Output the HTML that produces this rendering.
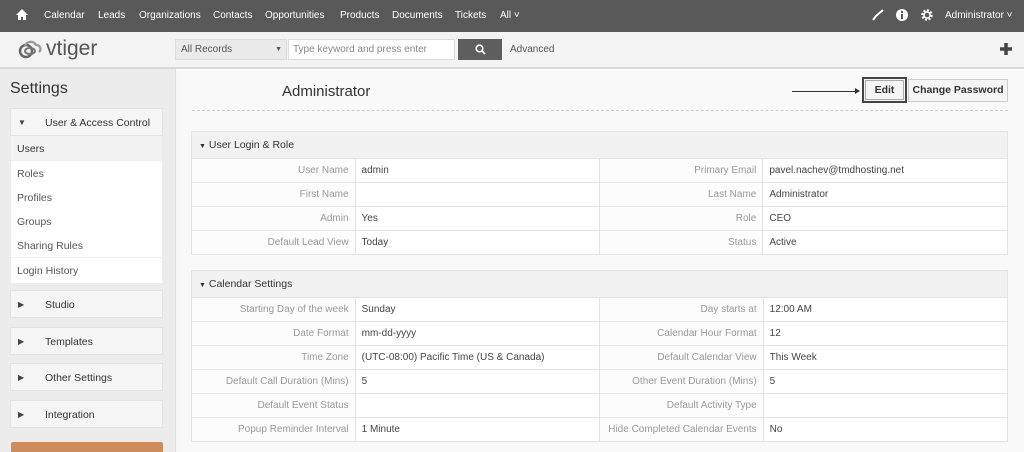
<!DOCTYPE html>
<html><head><meta charset="utf-8"><style>
*{box-sizing:border-box;margin:0;padding:0}
html,body{width:1024px;height:452px;overflow:hidden}
body{font-family:"Liberation Sans",sans-serif;background:#f7f7f7;position:relative;font-size:10.5px;color:#333}
.abs{position:absolute}
#top{left:0;top:0;width:1024px;height:32px;background:#595959;color:#fff;font-size:10px}
#top span{position:absolute;top:10px}
#hdr{left:0;top:32px;width:1024px;height:37px;background:#f3f3f3;border-bottom:2px solid #d9d9d9}
#side{left:0;top:69px;width:176px;height:383px;background:#ececec;border-right:1px solid #e0e0e0}
.box{position:absolute;left:10px;width:153px;background:#f5f5f5;border:1px solid #e2e2e2}
.box .t{position:absolute;left:34px;top:8px;font-size:10.5px;color:#333}
.box .a{position:absolute;left:7px;top:9px;font-size:8px;color:#444}
.item{position:absolute;left:11px;width:151px;height:25px;background:#fff;border-bottom:1px solid #eee;padding:7px 6px;color:#555}
table{position:absolute;left:191px;width:817px;border-collapse:collapse;background:#fff}
td{border:1px solid #e3e3e3;height:24px;padding:0 6px;font-size:10px}
td.l{text-align:right;color:#999;background:#fcfcfc;width:164px}
td.v{width:245px;color:#444}
th{background:#f1f1f1;height:27px;text-align:left;font-weight:normal;padding-left:7px;border:1px solid #e3e3e3;color:#333;font-size:10.5px}
.btn{position:absolute;top:79px;height:23px;background:#f5f5f5;border:1px solid #ccc;font-weight:bold;font-size:10.5px;text-align:center;line-height:21px}
</style></head><body>
<div id="top" class="abs">
<svg class="abs" style="left:16px;top:9px" width="12" height="11" viewBox="0 0 12 11"><path d="M6 0L0 6h2v5h3V8h2v3h3V6h2z" fill="#fff"/></svg>
<span style="left:44px">Calendar</span><span style="left:98px">Leads</span><span style="left:139px">Organizations</span><span style="left:213px">Contacts</span><span style="left:265px">Opportunities</span><span style="left:340px">Products</span><span style="left:392px">Documents</span><span style="left:455px">Tickets</span><span style="left:500px">All ˅</span>
<svg class="abs" style="left:872px;top:9px" width="12" height="12"><path d="M1 11L4 7M4 7L11 1" stroke="#fff" stroke-width="2"/></svg>
<svg class="abs" style="left:896px;top:9px" width="12" height="12"><circle cx="6" cy="6" r="6" fill="#fff"/><rect x="5" y="5" width="2" height="5" fill="#595959"/><rect x="5" y="2" width="2" height="2" fill="#595959"/></svg>
<svg class="abs" style="left:921px;top:9px" width="12" height="12"><circle cx="6" cy="6" r="4.5" fill="none" stroke="#fff" stroke-width="2.5" stroke-dasharray="2 1.5"/><circle cx="6" cy="6" r="3" fill="none" stroke="#fff" stroke-width="1.5"/></svg>
<span style="left:945px">Administrator ˅</span>
</div>
<div id="hdr" class="abs">
<svg class="abs" style="left:17px;top:8px" width="28" height="20" viewBox="0 0 28 20"><circle cx="9" cy="11" r="6" fill="none" stroke="#666" stroke-width="2.5"/><path d="M8 6a6 6 0 0 1 11-1a4 4 0 0 1 3 7" fill="none" stroke="#999" stroke-width="2.3"/><ellipse cx="13" cy="11" rx="5" ry="3" fill="none" stroke="#777" stroke-width="2"/></svg>
<span class="abs" style="left:46px;top:5px;font-size:21px;color:#555">vtiger</span>
<div class="abs" style="left:175px;top:7px;width:112px;height:21px;background:#eaeaea;border:1px solid #ddd;padding:4px 5px;font-size:10px;color:#555">All Records<span style="position:absolute;right:4px;font-size:7px;top:6px">▼</span></div>
<div class="abs" style="left:288px;top:7px;width:167px;height:21px;background:#fff;border:1px solid #ddd;padding:4px 4px;font-size:10px;color:#888">Type keyword and press enter</div>
<div class="abs" style="left:458px;top:7px;width:44px;height:21px;background:#5e5e5e"><svg style="position:absolute;left:17px;top:5px" width="11" height="11"><circle cx="4.5" cy="4.5" r="3.3" fill="none" stroke="#fff" stroke-width="1.6"/><path d="M7 7l3 3" stroke="#fff" stroke-width="1.8"/></svg></div>
<span class="abs" style="left:510px;top:12px;font-size:10px;color:#555">Advanced</span>
<svg class="abs" style="left:999px;top:10px" width="14" height="14"><path d="M7 1v12M1 7h12" stroke="#444" stroke-width="3.5"/></svg>
</div>
<div id="side" class="abs">
<div class="abs" style="left:10px;top:11px;font-size:16px;color:#333">Settings</div>
<div class="box" style="top:39px;height:28px"><span class="a">▼</span><span class="t">User &amp; Access Control</span></div>
<div class="item" style="top:67px;background:#f2f2f2;color:#333">Users</div>
<div class="item" style="top:92px">Roles</div>
<div class="item" style="top:116px">Profiles</div>
<div class="item" style="top:140px">Groups</div>
<div class="item" style="top:164px">Sharing Rules</div>
<div class="item" style="top:189px;height:25px;border:none">Login History</div>
<div class="box" style="top:221px;height:28px"><span class="a">▶</span><span class="t">Studio</span></div>
<div class="box" style="top:258px;height:28px"><span class="a">▶</span><span class="t">Templates</span></div>
<div class="box" style="top:294px;height:28px"><span class="a">▶</span><span class="t">Other Settings</span></div>
<div class="box" style="top:331px;height:28px"><span class="a">▶</span><span class="t">Integration</span></div>
<div class="abs" style="left:11px;top:373px;width:152px;height:20px;background:#cd8c5c;border-radius:2px"></div>
</div>
<div class="abs" style="left:177px;top:69px;width:847px;height:383px;background:#f9f9f9"></div>
<div class="abs" style="left:282px;top:83px;font-size:15px;color:#333">Administrator</div>
<div class="abs" style="left:192px;top:110px;width:816px;border-top:1px dashed #ccc"></div>
<div class="abs" style="left:792px;top:91px;width:66px;border-top:1px solid #333"></div>
<div class="abs" style="left:855px;top:88px;border-left:5px solid #333;border-top:3px solid transparent;border-bottom:3px solid transparent"></div>
<div class="btn" style="left:862px;top:77px;width:45px;height:26px;border:2px solid #444;outline:1px solid #aaa;outline-offset:-4px;line-height:22px">Edit</div>
<div class="btn" style="left:908px;width:100px">Change Password</div>
<table style="top:131px">
<tr><th colspan="4"><span style="font-size:7px">▼</span> User Login &amp; Role</th></tr>
<tr><td class="l">User Name</td><td class="v">admin</td><td class="l">Primary Email</td><td class="v">pavel.nachev@tmdhosting.net</td></tr>
<tr><td class="l">First Name</td><td class="v"></td><td class="l">Last Name</td><td class="v">Administrator</td></tr>
<tr><td class="l">Admin</td><td class="v">Yes</td><td class="l">Role</td><td class="v">CEO</td></tr>
<tr><td class="l">Default Lead View</td><td class="v">Today</td><td class="l">Status</td><td class="v">Active</td></tr>
</table>
<table style="top:270px">
<tr><th colspan="4"><span style="font-size:7px">▼</span> Calendar Settings</th></tr>
<tr><td class="l">Starting Day of the week</td><td class="v">Sunday</td><td class="l">Day starts at</td><td class="v">12:00 AM</td></tr>
<tr><td class="l">Date Format</td><td class="v">mm-dd-yyyy</td><td class="l">Calendar Hour Format</td><td class="v">12</td></tr>
<tr><td class="l">Time Zone</td><td class="v">(UTC-08:00) Pacific Time (US &amp; Canada)</td><td class="l">Default Calendar View</td><td class="v">This Week</td></tr>
<tr><td class="l">Default Call Duration (Mins)</td><td class="v">5</td><td class="l">Other Event Duration (Mins)</td><td class="v">5</td></tr>
<tr><td class="l">Default Event Status</td><td class="v"></td><td class="l">Default Activity Type</td><td class="v"></td></tr>
<tr><td class="l">Popup Reminder Interval</td><td class="v">1 Minute</td><td class="l">Hide Completed Calendar Events</td><td class="v">No</td></tr>
</table>
</body></html>
